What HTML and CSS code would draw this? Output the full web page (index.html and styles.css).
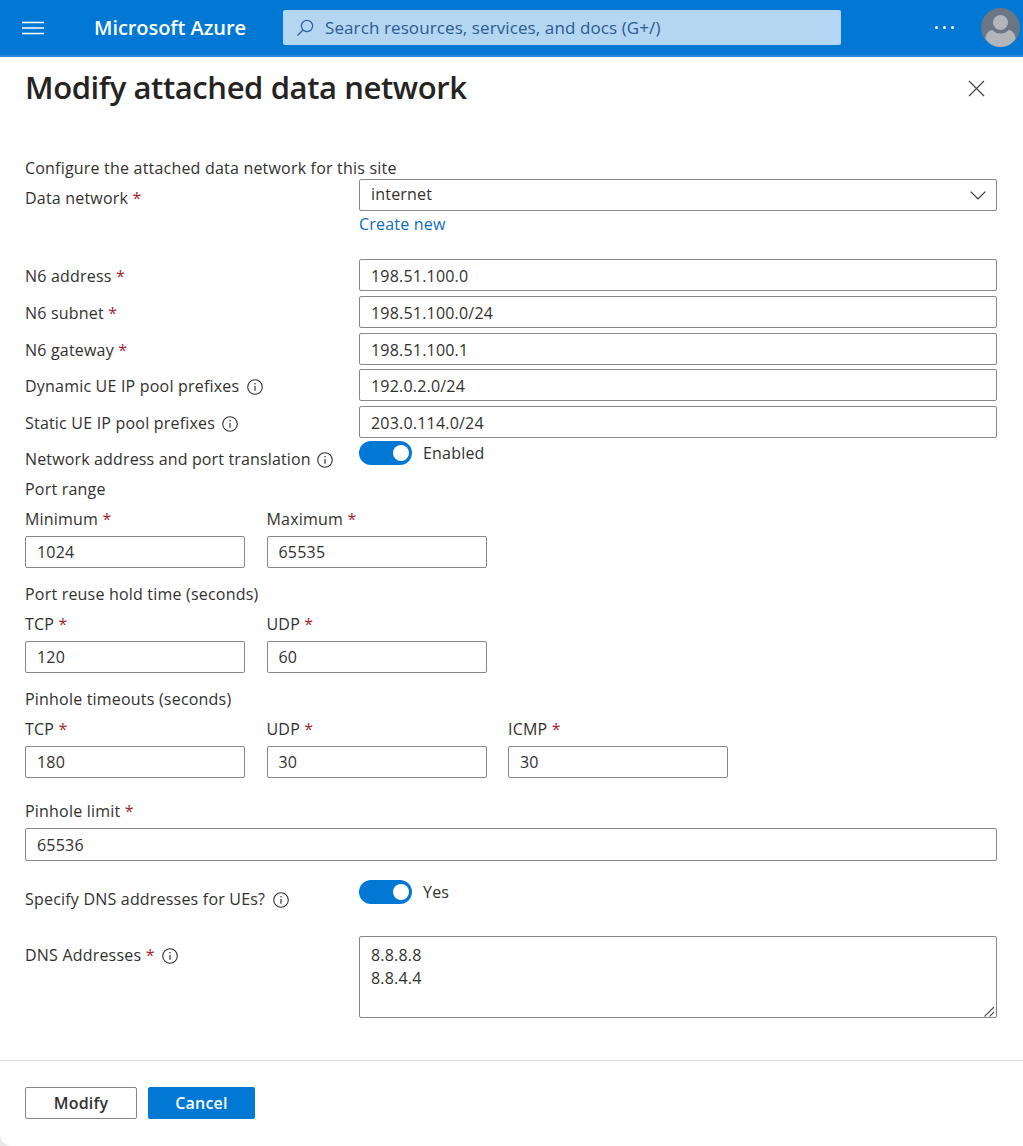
FILE: index.html
```html
<!DOCTYPE html>
<html lang="en">
<head>
<meta charset="utf-8">
<title>Modify attached data network</title>
<link rel="stylesheet" href="styles.css">
</head>
<body>
<header class="topbar">
  <svg class="menu-icon" width="22" height="14" viewBox="0 0 22 14"><path d="M0 1.5h22M0 7h22M0 12.5h22" stroke="#fff" stroke-width="1.3" fill="none"/></svg>
  <div class="brand">Microsoft Azure</div>
  <div class="search">
    <svg class="search-icon" width="18" height="18" viewBox="0 0 18 18"><circle cx="11" cy="7" r="5.6" fill="none" stroke="#2f5f94" stroke-width="1.2"/><path d="M7 11 1.5 16.5" stroke="#2f5f94" stroke-width="1.3" fill="none"/></svg>
    <span>Search resources, services, and docs (G+/)</span>
  </div>
  <div class="dots"><i></i><i></i><i></i></div>
  <div class="avatar">
    <svg width="39" height="39" viewBox="0 0 39 39"><circle cx="19.5" cy="19.5" r="19.5" fill="#6b7685"/><circle cx="19.5" cy="14.5" r="7.5" fill="#b2b6ba"/><path d="M4.5 31c0-6 3.500-8.500 7-9 2 2.500 4.500 3.500 8 3.500s6-1 8-3.500c3.500.5 7 3 7 9-3.500 5-9 8-15 8s-11.500-3-15-8z" fill="#b2b6ba"/></svg>
  </div>
</header>
<main class="panel">
  <div class="panel-head">
    <h1>Modify attached data network</h1>
    <svg class="close" width="17" height="17" viewBox="0 0 17 17"><path d="M1 1l15 15M16 1 1 16" stroke="#444" stroke-width="1.2" fill="none"/></svg>
  </div>
  <p class="intro">Configure the attached data network for this site</p>

  <div class="row row-dn">
    <label class="lbl">Data network <b>*</b></label>
    <div>
      <div class="box select"><span>internet</span>
        <svg width="16" height="9" viewBox="0 0 16 9"><path d="M.7.7 8 8 15.300.7" stroke="#333" stroke-width="1.200" fill="none"/></svg>
      </div>
      <a class="link">Create new</a>
    </div>
  </div>

  <div class="stack">
    <div class="row"><label class="lbl">N6 address <b>*</b></label><input class="box" value="198.51.100.0"></div>
    <div class="row"><label class="lbl">N6 subnet <b>*</b></label><input class="box" value="198.51.100.0/24"></div>
    <div class="row"><label class="lbl">N6 gateway <b>*</b></label><input class="box" value="198.51.100.1"></div>
    <div class="row"><label class="lbl">Dynamic UE IP pool prefixes <svg class="info" viewBox="0 0 16 16"><use href="#i"/></svg></label><input class="box" value="192.0.2.0/24"></div>
    <div class="row"><label class="lbl">Static UE IP pool prefixes <svg class="info" viewBox="0 0 16 16"><use href="#i"/></svg></label><input class="box" value="203.0.114.0/24"></div>
  </div>

  <div class="row row-nat">
    <label class="lbl">Network address and port translation <svg class="info" viewBox="0 0 16 16"><use href="#i"/></svg></label>
    <div class="toggle-wrap"><span class="toggle"></span><span>Enabled</span></div>
  </div>

  <div class="group-title first">Port range</div>
  <div class="trio">
    <div class="col"><label>Minimum <b>*</b></label><input class="box" value="1024"></div>
    <div class="col"><label>Maximum <b>*</b></label><input class="box" value="65535"></div>
  </div>

  <div class="group-title">Port reuse hold time (seconds)</div>
  <div class="trio">
    <div class="col"><label>TCP <b>*</b></label><input class="box" value="120"></div>
    <div class="col"><label>UDP <b>*</b></label><input class="box" value="60"></div>
  </div>

  <div class="group-title">Pinhole timeouts (seconds)</div>
  <div class="trio">
    <div class="col"><label>TCP <b>*</b></label><input class="box" value="180"></div>
    <div class="col"><label>UDP <b>*</b></label><input class="box" value="30"></div>
    <div class="col"><label>ICMP <b>*</b></label><input class="box" value="30"></div>
  </div>

  <div class="limit">
    <label>Pinhole limit <b>*</b></label>
    <input class="box" value="65536">
  </div>

  <div class="row row-dns">
    <label class="lbl">Specify DNS addresses for UEs? <svg class="info" viewBox="0 0 16 16"><use href="#i"/></svg></label>
    <div class="toggle-wrap"><span class="toggle"></span><span>Yes</span></div>
  </div>

  <div class="row row-area">
    <label class="lbl">DNS Addresses <b>*</b> <svg class="info" viewBox="0 0 16 16"><use href="#i"/></svg></label>
    <div class="area-wrap">
      <textarea class="box area">8.8.8.8
8.8.4.4</textarea>
      <svg class="grip" width="11" height="11" viewBox="0 0 11 11"><path d="M.5 10.500 10 1M5.500 10.500 10 6" stroke="#555" stroke-width="1.100" fill="none"/></svg>
    </div>
  </div>

  <footer class="actions">
    <button class="btn">Modify</button>
    <button class="btn primary">Cancel</button>
  </footer>
</main>
<svg class="defs" width="0" height="0"><symbol id="i" viewBox="0 0 16 16"><circle cx="8" cy="8" r="7.300" fill="none" stroke="#333" stroke-width="1.100"/><path d="M8 7v4.800" stroke="#333" stroke-width="1.200"/><circle cx="8" cy="4.800" r=".8" fill="#333"/></symbol></svg>
</body>
</html>
```
FILE: styles.css
```css
* { box-sizing: border-box; }
html, body { margin: 0; height: 1146px; overflow: hidden; }
body {
  background: #e9e9e9;
  font-family: "Open Sans", "Noto Sans", sans-serif;
  font-size: 16px;
  color: #323130;
  letter-spacing: 0.2px;
}
.defs { position: absolute; }
.topbar {
  height: 57px;
  background: #0078d4;
  border-bottom: 2px solid #2b88d8;
  display: flex;
  align-items: center;
  color: #fff;
}
.menu-icon { margin-left: 22px; }
.brand { margin-left: 50px; width: 189px; font-size: 20px; font-weight: 600; letter-spacing: -0.05px; }
.search {
  width: 558px;
  height: 35px;
  background: #b3d6f2;
  border-radius: 2px;
  display: flex;
  align-items: center;
  color: #2b5c8f;
  font-size: 17px;
  letter-spacing: 0.1px;
}
.search-icon { margin: 0 11px 0 13px; }
.dots { margin-left: 94px; display: flex; gap: 5px; }
.dots i { width: 3px; height: 3px; border-radius: 50%; background: #fff; }
.avatar { margin-left: 27px; width: 39px; height: 39px; }
.avatar svg { display: block; }
.panel {
  background: #fff;
  height: 1089px;
  padding: 0 26px 0 25px;
  border-radius: 0 0 0 12px;
}
.panel-head {
  height: 63px;
  display: flex;
  justify-content: space-between;
  align-items: center;
  padding-right: 12px;
}
h1 { margin: -4px 0 0; font-size: 31px; font-weight: 600; color: #252423; letter-spacing: -0.4px; }
.intro { margin: 37px 0 0; height: 22px; line-height: 22px; }
.row { display: grid; grid-template-columns: 334px 1fr; }
.lbl { line-height: 22px; padding-top: 5px; white-space: nowrap; }
b { color: #a4262c; font-weight: 400; }
.info { width: 16px; height: 16px; vertical-align: -3px; margin-left: 3px; }
.box {
  display: block;
  width: 100%;
  height: 32px;
  border: 1px solid #8a8886;
  border-radius: 2px;
  padding: 0 11px;
  font: inherit;
  letter-spacing: inherit;
  color: #323130;
  background: #fff;
  outline: 0;
}
.select { display: flex; align-items: center; justify-content: space-between; padding-right: 10px; }
.select span { margin-top: -2px; }
.link { display: block; color: #0f6cbd; margin-top: 2px; line-height: 22px; }
.row-dn { height: 70px; }
.row-dn .lbl { padding-top: 8px; }
.stack { display: flex; flex-direction: column; gap: 5px; margin-top: 10px; }
.stack .row:nth-child(4) { margin-top: -1px; }
.stack .lbl { padding-top: 6px; }
.stack .box { padding-top: 1px; }
.row-nat { height: 30px; margin-top: 3px; }
.row-nat .lbl { padding-top: 7px; letter-spacing: 0.15px; }
.row-nat .info { margin-left: 2px; }
.toggle-wrap { display: flex; align-items: center; height: 24px; }
.toggle {
  width: 53px;
  height: 24px;
  border-radius: 12px;
  background: #0078d4;
  position: relative;
  margin-right: 11px;
}
.toggle::after {
  content: "";
  position: absolute;
  right: 3px;
  top: 4px;
  width: 16px;
  height: 16px;
  border-radius: 50%;
  background: #fff;
}
.group-title { line-height: 22px; margin-top: 15px; }
.group-title.first { margin-top: 7px; }
.trio { display: flex; gap: 21.5px; margin-top: 8px; }
.col { width: 220px; }
.col label { display: block; line-height: 22px; margin-bottom: 6px; }
.limit { margin-top: 22px; }
.limit label { display: block; line-height: 22px; margin-bottom: 6px; }
.limit .box { height: 33px; }
.row-dns { margin-top: 19px; height: 56px; }
.row-dns .lbl { padding-top: 8px; }
.row-area { height: 124px; }
.row-area .lbl { padding-top: 8px; }
.area-wrap { position: relative; height: 82px; }
.area { height: 82px; padding: 7px 11px; line-height: 23px; resize: none; }
.grip { position: absolute; right: 2px; bottom: 1px; pointer-events: none; }
.actions {
  margin: 0 -26px 0 -25px;
  border-top: 1px solid #e1dfdd;
  padding: 26px 25px 0;
  display: flex;
  gap: 11px;
}
.btn {
  height: 32px;
  width: 112px;
  border: 1px solid #8a8886;
  border-radius: 2px;
  background: #fff;
  font: inherit;
  font-weight: 600;
  letter-spacing: inherit;
  color: #323130;
}
.btn.primary { width: 107px; background: #0078d4; border-color: #0078d4; color: #fff; }
```
